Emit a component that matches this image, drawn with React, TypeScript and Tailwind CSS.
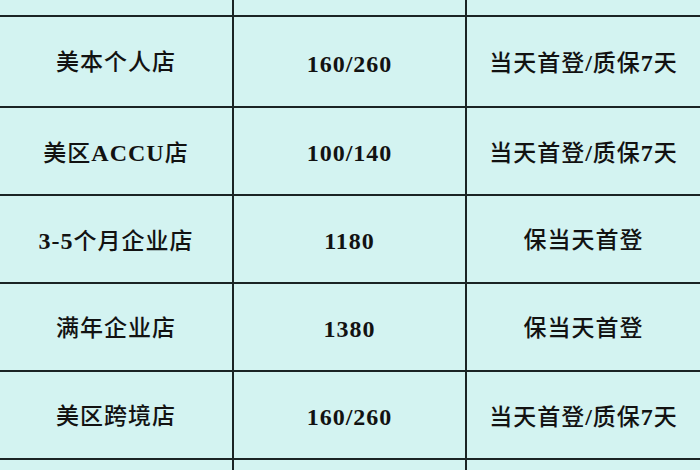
const ROWS = [
  ['美本个人店', '160/260', '当天首登/质保7天'],
  ['美区ACCU店', '100/140', '当天首登/质保7天'],
  ['3-5个月企业店', '1180', '保当天首登'],
  ['满年企业店', '1380', '保当天首登'],
  ['美区跨境店', '160/260', '当天首登/质保7天'],
]

const FONT = {
  fontFamily: '"Liberation Serif", "Noto Sans CJK SC", serif',
}

// latin runs bold serif, CJK runs medium
function Label({ text }: { text: string }) {
  const parts = text.split(/([\x00-\x7f]+)/).filter(Boolean)
  return (
    <span className="tracking-[1px] text-[#121212]">
      {parts.map((p, i) =>
        /^[\x00-\x7f]+$/.test(p) ? (
          <span key={i} className="text-[24px] font-bold">
            {p}
          </span>
        ) : (
          <span key={i} className="text-[23px] font-medium">
            {p}
          </span>
        ),
      )}
    </span>
  )
}

function Cell({ text, last }: { text?: string; last?: boolean }) {
  return (
    <div
      className={`flex items-center justify-center border-b-2 border-[#1a2424] pt-[4px] ${
        last ? '' : 'border-r-2'
      }`}
    >
      {text && <Label text={text} />}
    </div>
  )
}

export default function App() {
  return (
    <div className="h-[470px] w-[700px] overflow-hidden bg-[#d3f3f1]" style={FONT}>
      <div className="grid grid-cols-[234px_233px_1fr] grid-rows-[17px_91px_88px_88px_88px_88px_40px]">
        <Cell />
        <Cell />
        <Cell last />
        {ROWS.map((row) => (
          <>
            <Cell key={row[0] + 'a'} text={row[0]} />
            <Cell key={row[0] + 'b'} text={row[1]} />
            <Cell key={row[0] + 'c'} text={row[2]} last />
          </>
        ))}
        <Cell />
        <Cell />
        <Cell last />
      </div>
    </div>
  )
}
